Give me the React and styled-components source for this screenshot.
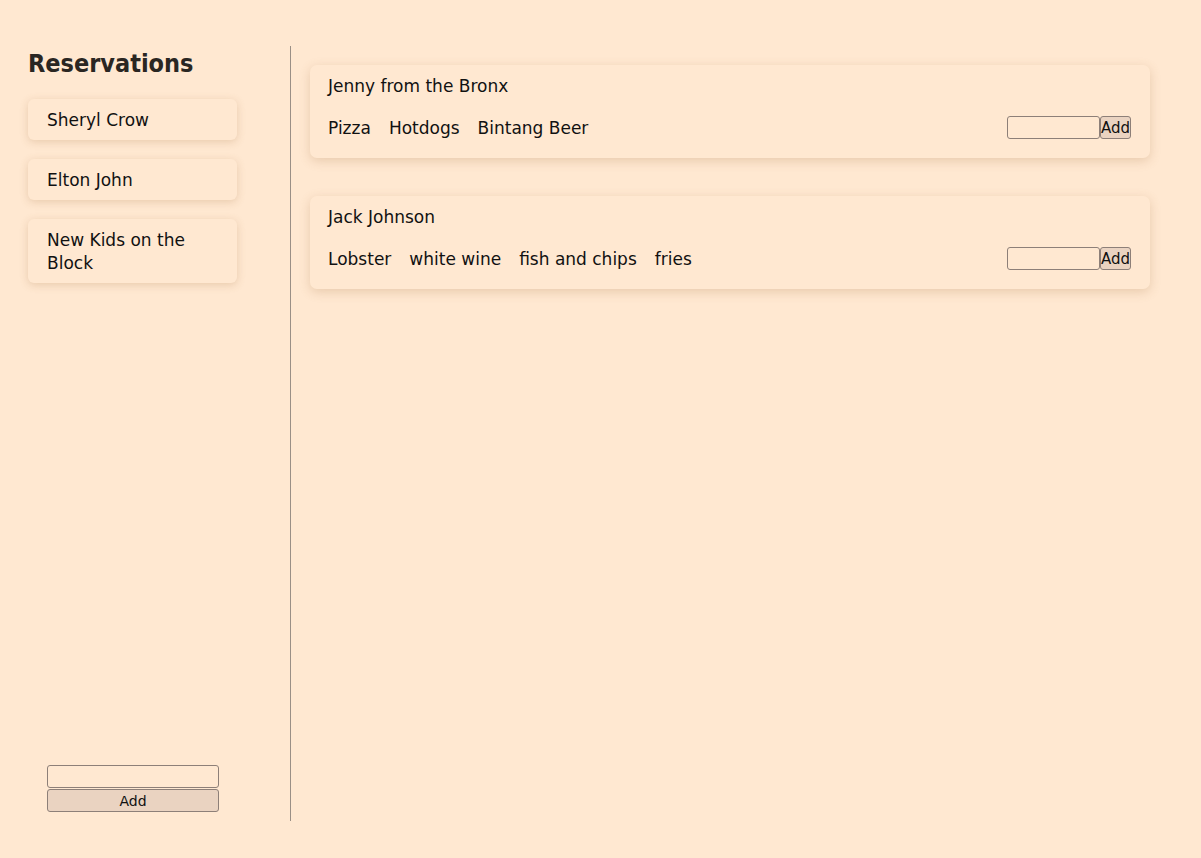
import React, { useState } from "react";
import styled, { createGlobalStyle } from "styled-components";

const GlobalStyle = createGlobalStyle`
    html, body {
        margin: 0;
        padding: 0;
        background: #ffe8d1;
    }
    body {
        font-family: "DejaVu Sans", sans-serif;
        color: #111;
    }
`;

const Layout = styled.div`
    display: flex;
    height: 858px;
    box-sizing: border-box;
    padding: 46px 0 37px;
`;

const Sidebar = styled.aside`
    width: 291px;
    flex-shrink: 0;
    border-right: 1px solid #9a8f86;
    box-sizing: border-box;
    padding: 0 53px 9px 28px;
    display: flex;
    flex-direction: column;
`;

const Title = styled.h1`
    margin: 0 0 18px;
    padding-top: 1px;
    font-family: "DejaVu Sans Condensed", "DejaVu Sans", sans-serif;
    font-size: 25px;
    line-height: 34px;
    font-weight: bold;
    color: #2a2622;
`;

const GuestList = styled.div`
    flex: 1;
    display: flex;
    flex-direction: column;
    gap: 19px;
`;

const GuestCard = styled.div`
    background: #ffe8d1;
    border-radius: 6px;
    padding: 10px 19px 8px;
    font-size: 17px;
    line-height: 23px;
    box-shadow: 0 2px 9px rgba(160, 110, 60, 0.24);
`;

const GuestForm = styled.form`
    display: flex;
    flex-direction: column;
    gap: 1px;
    padding: 0 18px 0 19px;
`;

const TextInput = styled.input`
    box-sizing: border-box;
    height: 23px;
    width: ${(props) => (props.$w ? props.$w + "px" : "100%")};
    border: 1px solid #8d7f78;
    border-radius: 3px;
    background: #ffe8d1;
    padding: 0 4px;
    font-family: inherit;
`;

const Button = styled.button`
    box-sizing: border-box;
    height: 23px;
    border: 1px solid #8d7f78;
    border-radius: 3px;
    background: #ead3c1;
    font-family: "DejaVu Sans", sans-serif;
    font-size: ${(props) => props.$size || 14}px;
    color: #111;
    padding: 0;
    cursor: pointer;
`;

const Main = styled.main`
    flex: 1;
    padding: 19px 51px 0 19px;
    display: flex;
    flex-direction: column;
    gap: 38px;
`;

const OrderCard = styled.div`
    background: #ffe8d1;
    border-radius: 7px;
    padding: 10px 19px 19px 18px;
    box-shadow: 0 3px 11px rgba(160, 110, 60, 0.24);
`;

const CustomerName = styled.div`
    font-size: 17px;
    line-height: 22px;
    margin-bottom: 19px;
`;

const OrderRow = styled.div`
    display: flex;
    align-items: center;
    justify-content: space-between;
    height: 23px;
`;

const Foods = styled.div`
    display: flex;
    gap: 18px;
    font-size: 17px;
    line-height: 22px;
`;

const FoodForm = styled.form`
    display: flex;
    align-items: center;
`;

const reservations = ["Sheryl Crow", "Elton John", "New Kids on the Block"];

const customers = [
    { name: "Jenny from the Bronx", foods: ["Pizza", "Hotdogs", "Bintang Beer"] },
    { name: "Jack Johnson", foods: ["Lobster", "white wine", "fish and chips", "fries"] },
];

export default function App() {
    const [name, setName] = useState("");

    return (
        <>
            <GlobalStyle />
            <Layout>
                <Sidebar>
                    <Title>Reservations</Title>
                    <GuestList>
                        {reservations.map((r) => (
                            <GuestCard key={r}>{r}</GuestCard>
                        ))}
                    </GuestList>
                    <GuestForm onSubmit={(e) => e.preventDefault()}>
                        <TextInput value={name} onChange={(e) => setName(e.target.value)} />
                        <Button $size={14}>Add</Button>
                    </GuestForm>
                </Sidebar>
                <Main>
                    {customers.map((c) => (
                        <OrderCard key={c.name}>
                            <CustomerName>{c.name}</CustomerName>
                            <OrderRow>
                                <Foods>
                                    {c.foods.map((f) => (
                                        <span key={f}>{f}</span>
                                    ))}
                                </Foods>
                                <FoodForm onSubmit={(e) => e.preventDefault()}>
                                    <TextInput $w={93} />
                                    <Button $size={15}>Add</Button>
                                </FoodForm>
                            </OrderRow>
                        </OrderCard>
                    ))}
                </Main>
            </Layout>
        </>
    );
}
